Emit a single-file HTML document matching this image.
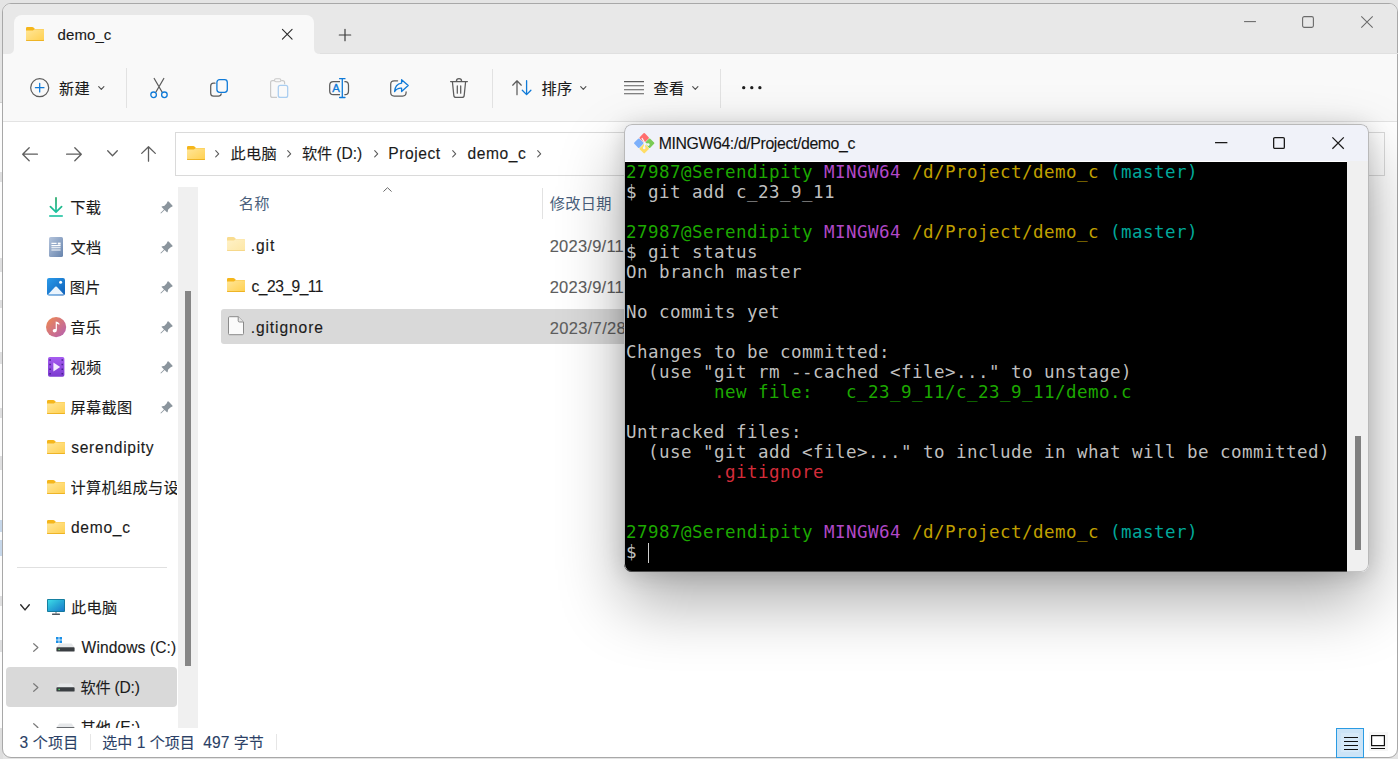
<!DOCTYPE html>
<html lang="zh-CN">
<head>
<meta charset="utf-8">
<title>demo_c</title>
<style>
*{box-sizing:border-box;margin:0;padding:0}
html,body{width:1398px;height:759px;overflow:hidden}
body{position:relative;background:#e4e4e4;font-family:"Liberation Sans","Noto Sans CJK SC",sans-serif;font-size:15px;color:#1b1b1b}
.abs{position:absolute}
svg{position:absolute;overflow:visible}
.t{position:absolute;white-space:nowrap;line-height:20px;height:20px;color:#1b1b1b;font-weight:400;-webkit-text-stroke:.12px}
#win{left:2px;top:3px;width:1396px;height:755px;border:1px solid #a8a8a8;border-radius:9px;background:#fff;overflow:hidden}
#titlebar{left:0;top:0;width:1396px;height:50px;background:#e8e8e8}
#tab{left:11px;top:10.5px;width:300px;height:40px;background:#f9f9f9;border-radius:8px 8px 0 0}
#toolbar{left:0;top:49.5px;width:1396px;height:68.5px;background:#f9f9f9;border-bottom:1px solid #e3e3e3}
#term{left:624px;top:124px;width:745px;height:448px;border-radius:8px;background:#f0f2f9;overflow:hidden;box-shadow:0 30px 66px rgba(0,0,0,.33),0 2px 22px rgba(0,0,0,.15)}
#term:after{content:"";position:absolute;left:0;top:0;right:0;bottom:0;border:1px solid #b9b9b9;border-bottom-color:rgba(150,150,150,.5);border-radius:8px}
#tbody{left:0;top:38px;width:723.3px;height:411px;background:#000;border-top:0}
#tscroll{left:723.3px;top:37px;width:22px;height:411px;background:#f0f0f0}
#tthumb{left:731.3px;top:311.8px;width:5.8px;height:114.7px;background:#808080}
.ln{position:absolute;white-space:pre;font-family:"DejaVu Sans Mono","Liberation Mono",monospace;font-size:17.5px;letter-spacing:.4645px;line-height:20px;height:20px;color:#bfbfbf}
.g{color:#1ca800}.m{color:#b148c6}.y{color:#c0a000}.c{color:#00a89a}.r{color:#d42c3a}.gn{color:#1ca800}
</style>
</head>
<body>
<div class="abs " style="left:0px;top:102px;width:3px;height:626px;background:#fcfcfc"></div>
<div class="abs " style="left:0px;top:728px;width:3px;height:31px;background:#dedede"></div>
<div class="abs " style="left:0px;top:101.5px;width:3px;height:1px;background:#cfcfcf"></div>
<div class="abs " style="left:0px;top:172px;width:2px;height:10px;background:#9a9aa0;opacity:.3"></div>
<div class="abs " style="left:0px;top:258px;width:2px;height:14px;background:#9a9aa0;opacity:.3"></div>
<div class="abs " style="left:0px;top:300px;width:2px;height:8px;background:#9a9aa0;opacity:.3"></div>
<div class="abs " style="left:0px;top:352px;width:2px;height:12px;background:#9a9aa0;opacity:.3"></div>
<div class="abs " style="left:0px;top:408px;width:2px;height:10px;background:#9a9aa0;opacity:.3"></div>
<div class="abs " style="left:0px;top:456px;width:2px;height:14px;background:#9a9aa0;opacity:.3"></div>
<div class="abs " style="left:0px;top:596px;width:2px;height:10px;background:#9a9aa0;opacity:.3"></div>
<div class="abs " style="left:0px;top:640px;width:2px;height:12px;background:#9a9aa0;opacity:.3"></div>
<div class="abs " style="left:0px;top:520px;width:2px;height:12px;background:#8fb2d8;opacity:.5"></div>
<div class="abs " style="left:0px;top:540px;width:2px;height:16px;background:#8fb2d8;opacity:.5"></div>
<div id="win" class="abs">
<div id="titlebar" class="abs"></div>
<div id="tab" class="abs"></div>
<svg style="left:305px;top:44px" width="12" height="6" viewBox="0 0 12 6"><path d="M0 6V0H6Q6 6 12 6Z" fill="#f9f9f9"/></svg>
<svg style="left:5px;top:44px" width="6" height="6" viewBox="0 0 6 6"><path d="M6 0V6H0Q6 6 6 0Z" fill="#f9f9f9"/></svg>
<div id="toolbar" class="abs"></div>
</div>
<div class="abs " style="left:320px;top:52.5px;width:1078px;height:1px;background:#e0e0e0"></div>
<svg style="left:26px;top:27px" width="18" height="14" viewBox="0 0 18 14" ><defs><linearGradient id="fg1" x1="0" y1="0" x2="1" y2="1"><stop offset="0" stop-color="#ffe699"/><stop offset="1" stop-color="#ffd04f"/></linearGradient></defs><path d="M0 1.2Q0 0 1.2 0H6.3Q7 0 7.5 .5L9 2H16.8Q18 2 18 3.2V12.8Q18 14 16.8 14H1.2Q0 14 0 12.8Z" fill="#f5b61b"/><path d="M0 3.6H6.2Q7 3.6 7.6 3.1L8.6 2.3H16.8Q18 2.3 18 3.5V12.8Q18 14 16.8 14H1.2Q0 14 0 12.8Z" fill="url(#fg1)"/><path d="M0 12.6V12.8Q0 14 1.2 14H16.8Q18 14 18 12.8V12.6Q18 13.3 16.8 13.3H1.2Q0 13.3 0 12.6Z" fill="#e9a912"/></svg>
<div id="tabtitle" class="t " style="left:57.50px;top:25.20px;font-size:15px;letter-spacing:0.100px;color:#1a1a1a">demo_c</div>
<svg style="left:282px;top:29px" width="10.5" height="10.5" viewBox="0 0 10 10" ><path d="M.4 .4L9.6 9.6M9.6 .4L.4 9.6" stroke="#2b2b2b" stroke-width="1.05" fill="none" stroke-linecap="round"/></svg>
<svg style="left:339px;top:29px" width="12" height="12" viewBox="0 0 12 12" ><path d="M6 .3V11.7M.3 6H11.7" stroke="#3c3c3c" stroke-width="1.2" fill="none" stroke-linecap="round"/></svg>
<svg style="left:1244px;top:21px" width="12" height="1.2" viewBox="0 0 12 1.2" ><path d="M0 .6H12" stroke="#6b6b6b" stroke-width="1.1"/></svg>
<svg style="left:1302px;top:16px" width="12" height="12" viewBox="0 0 12 12" ><rect x=".6" y=".6" width="10.8" height="10.8" rx="1.6" fill="none" stroke="#6b6b6b" stroke-width="1.1"/></svg>
<svg style="left:1361px;top:16px" width="12" height="12" viewBox="0 0 12 12" ><path d="M.3 .3L11.7 11.7M11.7 .3L.3 11.7" stroke="#6b6b6b" stroke-width="1.05" fill="none"/></svg>
<svg style="left:29.7px;top:77.7px" width="19.4" height="19.4" viewBox="0 0 20 20" ><circle cx="10" cy="10" r="9.3" fill="none" stroke="#5c5c5c" stroke-width="1.25"/><path d="M10 5.6V14.4M5.6 10H14.4" stroke="#0f7ad8" stroke-width="1.3" stroke-linecap="round"/></svg>
<div id="tnew" class="t " style="left:59.00px;top:79.40px;font-size:15.2px;letter-spacing:0.300px;color:#1a1a1a;font-weight:400">新建</div>
<svg style="left:98px;top:86.4px" width="6.6" height="4" viewBox="0 0 6.6 4" ><path d="M.7 .7L3.3 3.3L5.8999999999999995 .7" fill="none" stroke="#505050" stroke-width="1.15" stroke-linecap="round" stroke-linejoin="round"/></svg>
<div class="abs " style="left:126px;top:68px;width:1px;height:39.5px;background:#e2e2e2"></div>
<svg style="left:150px;top:77.7px" width="18" height="20.2" viewBox="0 0 18 20.2" ><path d="M4.2 .5L12.2 14.2M13.8 .5L5.8 14.2" stroke="#5c5c5c" stroke-width="1.25" fill="none" stroke-linecap="round"/><circle cx="3.6" cy="16.8" r="2.8" fill="none" stroke="#0f7ad8" stroke-width="1.3"/><circle cx="14.4" cy="16.8" r="2.8" fill="none" stroke="#0f7ad8" stroke-width="1.3"/></svg>
<svg style="left:210px;top:79.4px" width="18" height="17.8" viewBox="0 0 18 17.8" ><path d="M5 4.2H3.6Q.7 4.2 .7 7.1V14.2Q.7 17.1 3.6 17.1H8.4Q10.9 17.1 11.2 14.9" fill="none" stroke="#5c5c5c" stroke-width="1.25" stroke-linecap="round"/><rect x="6.9" y=".7" width="10.4" height="12.6" rx="2.7" fill="none" stroke="#0f7ad8" stroke-width="1.3"/></svg>
<svg style="left:269.7px;top:77.7px" width="18.4" height="20.2" viewBox="0 0 18.4 20.2" ><path d="M4.3 2.6H2.6Q.6 2.6 .6 4.6V17.4Q.6 19.4 2.6 19.4H7M11.2 2.6H12.6Q14.6 2.6 14.6 4.6V6.2" fill="none" stroke="#c9c9c9" stroke-width="1.2"/><rect x="4.5" y=".8" width="6.4" height="3" rx="1.5" fill="none" stroke="#c9c9c9" stroke-width="1.1"/><rect x="8.3" y="7.3" width="9.4" height="12.2" rx="2" fill="none" stroke="#a9cdf0" stroke-width="1.25"/></svg>
<svg style="left:329px;top:77.7px" width="20.2" height="20.2" viewBox="0 0 20.2 20.2" ><path d="M11 3.6H4.4Q.7 3.6 .7 7.3V12.9Q.7 16.6 4.4 16.6H11M15.4 3.6H16.2Q19.5 3.6 19.5 7.3V12.9Q19.5 16.6 16.2 16.6H15.4" fill="none" stroke="#5c5c5c" stroke-width="1.25"/><path d="M10.6 .7H16M10.6 19.5H16M13.3 .7V19.5" stroke="#0f7ad8" stroke-width="1.3" fill="none" stroke-linecap="round"/><text x="7" y="13.9" text-anchor="middle" font-family="Liberation Sans,sans-serif" font-size="11.4" fill="#0f7ad8" stroke="#0f7ad8" stroke-width=".35">A</text></svg>
<svg style="left:390px;top:79.2px" width="19" height="17.8" viewBox="0 0 19 17.8" ><path d="M7.6 1.8H4.2Q.7 1.8 .7 5.3V13.6Q.7 17.1 4.2 17.1H12.6Q16.1 17.1 16.1 13.6V12.9" fill="none" stroke="#5c5c5c" stroke-width="1.25" stroke-linecap="round"/><path d="M11.6 .7L18.2 6.6L11.6 12.5V9.2Q7 8.9 4.6 12.6Q5 5.2 11.6 4.2Z" fill="none" stroke="#0f7ad8" stroke-width="1.3" stroke-linejoin="round"/></svg>
<svg style="left:450px;top:77.7px" width="18" height="20.2" viewBox="0 0 18 20.2" ><path d="M.6 3.6H17.4M6.4 3.4Q6.4 .7 9 .7Q11.6 .7 11.6 3.4M2.4 3.8L3.8 17.4Q4 19.5 6 19.5H12Q14 19.5 14.2 17.4L15.6 3.8M7.3 8V15.2M10.7 8V15.2" fill="none" stroke="#5c5c5c" stroke-width="1.25" stroke-linecap="round"/></svg>
<div class="abs " style="left:492px;top:68.5px;width:1px;height:39.5px;background:#e2e2e2"></div>
<svg style="left:511.8px;top:80.2px" width="20.4" height="15.4" viewBox="0 0 20.4 15.4" ><path d="M5 14.7V1M.7 5.2L5 .8L9.3 5.2" fill="none" stroke="#5c5c5c" stroke-width="1.25" stroke-linecap="round" stroke-linejoin="round"/><path d="M14.6 .7V14.4M10.3 10.2L14.6 14.6L18.9 10.2" fill="none" stroke="#0f7ad8" stroke-width="1.3" stroke-linecap="round" stroke-linejoin="round"/></svg>
<div id="tsort" class="t " style="left:541.50px;top:79.40px;font-size:15.2px;letter-spacing:0.300px;color:#1a1a1a;font-weight:400">排序</div>
<svg style="left:579.8px;top:86.3px" width="6.6" height="4" viewBox="0 0 6.6 4" ><path d="M.7 .7L3.3 3.3L5.8999999999999995 .7" fill="none" stroke="#505050" stroke-width="1.15" stroke-linecap="round" stroke-linejoin="round"/></svg>
<svg style="left:624.2px;top:81.2px" width="20" height="13.4" viewBox="0 0 20 13.4" ><path d="M0 .6H20M0 4.7H20M0 8.8H20M0 12.8H20" stroke="#5c5c5c" stroke-width="1.1"/></svg>
<div id="tview" class="t " style="left:653.50px;top:79.40px;font-size:15.2px;letter-spacing:0.300px;color:#1a1a1a;font-weight:400">查看</div>
<svg style="left:691.5px;top:86.3px" width="6.6" height="4" viewBox="0 0 6.6 4" ><path d="M.7 .7L3.3 3.3L5.8999999999999995 .7" fill="none" stroke="#505050" stroke-width="1.15" stroke-linecap="round" stroke-linejoin="round"/></svg>
<div class="abs " style="left:720px;top:68.5px;width:1px;height:39.5px;background:#e2e2e2"></div>
<svg style="left:741.6px;top:86.3px" width="19.6" height="3.4" viewBox="0 0 19.6 3.4" ><circle cx="1.7" cy="1.7" r="1.65" fill="#1f1f1f"/><circle cx="9.8" cy="1.7" r="1.65" fill="#1f1f1f"/><circle cx="17.9" cy="1.7" r="1.65" fill="#1f1f1f"/></svg>
<svg style="left:22px;top:147px" width="16" height="14.4" viewBox="0 0 16 14.4" ><path d="M15.4 7.2H.9M7.2 .7L.7 7.2L7.2 13.7" fill="none" stroke="#5e5e5e" stroke-width="1.3" stroke-linecap="round" stroke-linejoin="round"/></svg>
<svg style="left:66px;top:147px" width="16" height="14.4" viewBox="0 0 16 14.4" ><path d="M.6 7.2H15.1M8.8 .7L15.3 7.2L8.8 13.7" fill="none" stroke="#5e5e5e" stroke-width="1.3" stroke-linecap="round" stroke-linejoin="round"/></svg>
<svg style="left:107px;top:150px" width="11" height="6.4" viewBox="0 0 11 6.4" ><path d="M.7 .7L5.5 5.7L10.3 .7" fill="none" stroke="#5e5e5e" stroke-width="1.3" stroke-linecap="round" stroke-linejoin="round"/></svg>
<svg style="left:140.7px;top:146px" width="15" height="15.8" viewBox="0 0 15 15.8" ><path d="M7.5 15.2V.9M.7 7.4L7.5 .7L14.3 7.4" fill="none" stroke="#5e5e5e" stroke-width="1.3" stroke-linecap="round" stroke-linejoin="round"/></svg>
<div class="abs " style="left:175px;top:132px;width:1210px;height:44px;border:1px solid #dadada;background:#fff"></div>
<svg style="left:187.2px;top:146px" width="18" height="14" viewBox="0 0 18 14" ><defs><linearGradient id="fg2" x1="0" y1="0" x2="1" y2="1"><stop offset="0" stop-color="#ffe699"/><stop offset="1" stop-color="#ffd04f"/></linearGradient></defs><path d="M0 1.2Q0 0 1.2 0H6.3Q7 0 7.5 .5L9 2H16.8Q18 2 18 3.2V12.8Q18 14 16.8 14H1.2Q0 14 0 12.8Z" fill="#f5b61b"/><path d="M0 3.6H6.2Q7 3.6 7.6 3.1L8.6 2.3H16.8Q18 2.3 18 3.5V12.8Q18 14 16.8 14H1.2Q0 14 0 12.8Z" fill="url(#fg2)"/><path d="M0 12.6V12.8Q0 14 1.2 14H16.8Q18 14 18 12.8V12.6Q18 13.3 16.8 13.3H1.2Q0 13.3 0 12.6Z" fill="#e9a912"/></svg>
<svg style="left:215.2px;top:149.5px" width="4.4" height="7.6" viewBox="0 0 4.4 7.6" ><path d="M.7 .7L3.7 3.8L.7 6.8999999999999995" fill="none" stroke="#5a5a5a" stroke-width="1.1" stroke-linecap="round" stroke-linejoin="round"/></svg>
<div id="bc1" class="t " style="left:230.50px;top:144.40px;font-size:15.2px;letter-spacing:0.300px;">此电脑</div>
<svg style="left:287px;top:149.5px" width="4.4" height="7.6" viewBox="0 0 4.4 7.6" ><path d="M.7 .7L3.7 3.8L.7 6.8999999999999995" fill="none" stroke="#5a5a5a" stroke-width="1.1" stroke-linecap="round" stroke-linejoin="round"/></svg>
<div id="bc2" class="t " style="left:302.00px;top:144.40px;font-size:15.2px;letter-spacing:-0.082px;">软件 <span style="font-size:15.6px">(D:)</span></div>
<svg style="left:374px;top:149.5px" width="4.4" height="7.6" viewBox="0 0 4.4 7.6" ><path d="M.7 .7L3.7 3.8L.7 6.8999999999999995" fill="none" stroke="#5a5a5a" stroke-width="1.1" stroke-linecap="round" stroke-linejoin="round"/></svg>
<div id="bc3" class="t " style="left:388.35px;top:143.70px;font-size:15.6px;letter-spacing:0.541px;">Project</div>
<svg style="left:452.4px;top:149.5px" width="4.4" height="7.6" viewBox="0 0 4.4 7.6" ><path d="M.7 .7L3.7 3.8L.7 6.8999999999999995" fill="none" stroke="#5a5a5a" stroke-width="1.1" stroke-linecap="round" stroke-linejoin="round"/></svg>
<div id="bc4" class="t " style="left:467.50px;top:143.70px;font-size:15.6px;letter-spacing:0.550px;">demo_c</div>
<svg style="left:537px;top:149.5px" width="4.4" height="7.6" viewBox="0 0 4.4 7.6" ><path d="M.7 .7L3.7 3.8L.7 6.8999999999999995" fill="none" stroke="#5a5a5a" stroke-width="1.1" stroke-linecap="round" stroke-linejoin="round"/></svg>
<div class="abs " style="left:178px;top:187px;width:20px;height:541px;background:#f0f0f0"></div>
<div class="abs " style="left:185px;top:291px;width:6.4px;height:374.5px;background:#868686"></div>
<svg style="left:49px;top:197px" width="14" height="20" viewBox="0 0 14 20" ><defs><linearGradient id="dlg" x1="0" y1="0" x2="0" y2="1"><stop offset="0" stop-color="#25a868"/><stop offset="1" stop-color="#1cc2a0"/></linearGradient></defs><path d="M7 .8V15M1.4 9.6L7 15.2L12.6 9.6" fill="none" stroke="url(#dlg)" stroke-width="1.7" stroke-linecap="round" stroke-linejoin="round"/><path d="M.2 19H13.8" stroke="#1cc2a0" stroke-width="1.6"/></svg>
<div id="s1" class="t " style="left:70.25px;top:198.40px;font-size:15.2px;letter-spacing:0.300px;">下载</div>
<svg style="left:160px;top:200.6px" width="13" height="13" viewBox="0 0 13 13" ><path d="M8.6 .6L12.4 4.4Q13 5.1 12.3 5.6L10.4 6.4L8 8.8Q8.2 10.6 7.2 11.6L4.6 9L1 12.6L.4 12L4 8.4L1.4 5.8Q2.4 4.8 4.2 5L6.6 2.6L7.4 .7Q7.9 0 8.6 .6Z" fill="#8b959d"/></svg>
<svg style="left:49px;top:237px" width="14" height="20" viewBox="0 0 14 20" ><defs><linearGradient id="dcg" x1="0" y1="0" x2="1" y2="1"><stop offset="0" stop-color="#b4c4dc"/><stop offset="1" stop-color="#6784ad"/></linearGradient></defs><rect width="14" height="20" rx="1.6" fill="url(#dcg)"/><path d="M2.4 6.4H7.6M2.4 8.6H11.6M2.4 10.8H11.6M2.4 13H11.6" stroke="#fff" stroke-width="1.1"/><rect x="8.8" y="5.6" width="2.8" height="2" fill="#fff"/></svg>
<div id="s2" class="t " style="left:70.50px;top:238.40px;font-size:15.2px;letter-spacing:0.300px;">文档</div>
<svg style="left:160px;top:240.6px" width="13" height="13" viewBox="0 0 13 13" ><path d="M8.6 .6L12.4 4.4Q13 5.1 12.3 5.6L10.4 6.4L8 8.8Q8.2 10.6 7.2 11.6L4.6 9L1 12.6L.4 12L4 8.4L1.4 5.8Q2.4 4.8 4.2 5L6.6 2.6L7.4 .7Q7.9 0 8.6 .6Z" fill="#8b959d"/></svg>
<svg style="left:47px;top:278.3px" width="18" height="17.4" viewBox="0 0 18 17.4" ><defs><linearGradient id="pcg" x1="0" y1="0" x2="1" y2="1"><stop offset="0" stop-color="#2a9bea"/><stop offset="1" stop-color="#0f5fb8"/></linearGradient></defs><rect width="18" height="17.4" rx="2" fill="url(#pcg)"/><path d="M1 16.4L8.2 8.8Q9 8 9.8 8.8L17 16.4Z" fill="#eaf4fd"/><circle cx="13.6" cy="4.2" r="1.5" fill="#fff"/></svg>
<div id="s3" class="t " style="left:69.75px;top:278.40px;font-size:15.2px;letter-spacing:0.300px;">图片</div>
<svg style="left:160px;top:280.6px" width="13" height="13" viewBox="0 0 13 13" ><path d="M8.6 .6L12.4 4.4Q13 5.1 12.3 5.6L10.4 6.4L8 8.8Q8.2 10.6 7.2 11.6L4.6 9L1 12.6L.4 12L4 8.4L1.4 5.8Q2.4 4.8 4.2 5L6.6 2.6L7.4 .7Q7.9 0 8.6 .6Z" fill="#8b959d"/></svg>
<svg style="left:45.8px;top:316.9px" width="20.2" height="20.2" viewBox="0 0 20 20" ><defs><linearGradient id="mug" x1="0" y1="0" x2="1" y2="1"><stop offset="0" stop-color="#f08a4e"/><stop offset="1" stop-color="#b45fb4"/></linearGradient></defs><circle cx="10" cy="10" r="10" fill="url(#mug)"/><path d="M9.6 4.4Q11.6 4.6 13.2 6.2V8Q11.6 6.8 10.8 6.8V13Q10.8 15.4 8.6 15.4Q6.6 15.4 6.6 13.6Q6.6 11.8 8.6 11.8Q9.2 11.8 9.6 12Z" fill="#fff"/></svg>
<div id="s4" class="t " style="left:70.25px;top:318.40px;font-size:15.2px;letter-spacing:0.300px;">音乐</div>
<svg style="left:160px;top:320.6px" width="13" height="13" viewBox="0 0 13 13" ><path d="M8.6 .6L12.4 4.4Q13 5.1 12.3 5.6L10.4 6.4L8 8.8Q8.2 10.6 7.2 11.6L4.6 9L1 12.6L.4 12L4 8.4L1.4 5.8Q2.4 4.8 4.2 5L6.6 2.6L7.4 .7Q7.9 0 8.6 .6Z" fill="#8b959d"/></svg>
<svg style="left:47.7px;top:357.2px" width="16.4" height="19.8" viewBox="0 0 16.4 19.8" ><defs><linearGradient id="vdg" x1="0" y1="0" x2="0" y2="1"><stop offset="0" stop-color="#a65cf0"/><stop offset="1" stop-color="#7c3bd0"/></linearGradient></defs><rect width="16.4" height="19.8" rx="1.8" fill="url(#vdg)"/><path d="M5.4 5.4L12.2 9.9L5.4 14.4Z" fill="#f4ebff"/><path d="M1.3 3H2.9M1.3 7.6H2.9M1.3 12.2H2.9M1.3 16.8H2.9M13.5 3H15.1M13.5 7.6H15.1M13.5 12.2H15.1M13.5 16.8H15.1" stroke="#4a2490" stroke-width="1.5"/></svg>
<div id="s5" class="t " style="left:70.50px;top:358.40px;font-size:15.2px;letter-spacing:0.300px;">视频</div>
<svg style="left:160px;top:360.6px" width="13" height="13" viewBox="0 0 13 13" ><path d="M8.6 .6L12.4 4.4Q13 5.1 12.3 5.6L10.4 6.4L8 8.8Q8.2 10.6 7.2 11.6L4.6 9L1 12.6L.4 12L4 8.4L1.4 5.8Q2.4 4.8 4.2 5L6.6 2.6L7.4 .7Q7.9 0 8.6 .6Z" fill="#8b959d"/></svg>
<svg style="left:47px;top:400px" width="18" height="14" viewBox="0 0 18 14" ><defs><linearGradient id="fg3" x1="0" y1="0" x2="1" y2="1"><stop offset="0" stop-color="#ffe699"/><stop offset="1" stop-color="#ffd04f"/></linearGradient></defs><path d="M0 1.2Q0 0 1.2 0H6.3Q7 0 7.5 .5L9 2H16.8Q18 2 18 3.2V12.8Q18 14 16.8 14H1.2Q0 14 0 12.8Z" fill="#f5b61b"/><path d="M0 3.6H6.2Q7 3.6 7.6 3.1L8.6 2.3H16.8Q18 2.3 18 3.5V12.8Q18 14 16.8 14H1.2Q0 14 0 12.8Z" fill="url(#fg3)"/><path d="M0 12.6V12.8Q0 14 1.2 14H16.8Q18 14 18 12.8V12.6Q18 13.3 16.8 13.3H1.2Q0 13.3 0 12.6Z" fill="#e9a912"/></svg>
<div id="s6" class="t " style="left:70.50px;top:398.40px;font-size:15.2px;letter-spacing:0.300px;">屏幕截图</div>
<svg style="left:160px;top:400.6px" width="13" height="13" viewBox="0 0 13 13" ><path d="M8.6 .6L12.4 4.4Q13 5.1 12.3 5.6L10.4 6.4L8 8.8Q8.2 10.6 7.2 11.6L4.6 9L1 12.6L.4 12L4 8.4L1.4 5.8Q2.4 4.8 4.2 5L6.6 2.6L7.4 .7Q7.9 0 8.6 .6Z" fill="#8b959d"/></svg>
<svg style="left:47px;top:440px" width="18" height="14" viewBox="0 0 18 14" ><defs><linearGradient id="fg4" x1="0" y1="0" x2="1" y2="1"><stop offset="0" stop-color="#ffe699"/><stop offset="1" stop-color="#ffd04f"/></linearGradient></defs><path d="M0 1.2Q0 0 1.2 0H6.3Q7 0 7.5 .5L9 2H16.8Q18 2 18 3.2V12.8Q18 14 16.8 14H1.2Q0 14 0 12.8Z" fill="#f5b61b"/><path d="M0 3.6H6.2Q7 3.6 7.6 3.1L8.6 2.3H16.8Q18 2.3 18 3.5V12.8Q18 14 16.8 14H1.2Q0 14 0 12.8Z" fill="url(#fg4)"/><path d="M0 12.6V12.8Q0 14 1.2 14H16.8Q18 14 18 12.8V12.6Q18 13.3 16.8 13.3H1.2Q0 13.3 0 12.6Z" fill="#e9a912"/></svg>
<div id="s7" class="t " style="left:71.25px;top:437.70px;font-size:15.6px;letter-spacing:0.700px;">serendipity</div>
<svg style="left:47px;top:480px" width="18" height="14" viewBox="0 0 18 14" ><defs><linearGradient id="fg5" x1="0" y1="0" x2="1" y2="1"><stop offset="0" stop-color="#ffe699"/><stop offset="1" stop-color="#ffd04f"/></linearGradient></defs><path d="M0 1.2Q0 0 1.2 0H6.3Q7 0 7.5 .5L9 2H16.8Q18 2 18 3.2V12.8Q18 14 16.8 14H1.2Q0 14 0 12.8Z" fill="#f5b61b"/><path d="M0 3.6H6.2Q7 3.6 7.6 3.1L8.6 2.3H16.8Q18 2.3 18 3.5V12.8Q18 14 16.8 14H1.2Q0 14 0 12.8Z" fill="url(#fg5)"/><path d="M0 12.6V12.8Q0 14 1.2 14H16.8Q18 14 18 12.8V12.6Q18 13.3 16.8 13.3H1.2Q0 13.3 0 12.6Z" fill="#e9a912"/></svg>
<div class="abs" style="left:71px;top:477px;width:106px;height:24px;overflow:hidden"><div id="s8" class="t " style="left:-0.50px;top:1.40px;font-size:15.2px;letter-spacing:0.300px;">计算机组成与设计</div></div>
<svg style="left:47px;top:520px" width="18" height="14" viewBox="0 0 18 14" ><defs><linearGradient id="fg6" x1="0" y1="0" x2="1" y2="1"><stop offset="0" stop-color="#ffe699"/><stop offset="1" stop-color="#ffd04f"/></linearGradient></defs><path d="M0 1.2Q0 0 1.2 0H6.3Q7 0 7.5 .5L9 2H16.8Q18 2 18 3.2V12.8Q18 14 16.8 14H1.2Q0 14 0 12.8Z" fill="#f5b61b"/><path d="M0 3.6H6.2Q7 3.6 7.6 3.1L8.6 2.3H16.8Q18 2.3 18 3.5V12.8Q18 14 16.8 14H1.2Q0 14 0 12.8Z" fill="url(#fg6)"/><path d="M0 12.6V12.8Q0 14 1.2 14H16.8Q18 14 18 12.8V12.6Q18 13.3 16.8 13.3H1.2Q0 13.3 0 12.6Z" fill="#e9a912"/></svg>
<div id="s9" class="t " style="left:71.00px;top:517.70px;font-size:15.6px;letter-spacing:0.700px;">demo_c</div>
<div class="abs " style="left:16.5px;top:567px;width:150.5px;height:1px;background:#e0e0e0"></div>
<svg style="left:20px;top:604px" width="10" height="6.6" viewBox="0 0 10 6.6" ><path d="M.7 .7L5.0 5.8999999999999995L9.3 .7" fill="none" stroke="#2a2a2a" stroke-width="1.4" stroke-linecap="round" stroke-linejoin="round"/></svg>
<svg style="left:47px;top:599px" width="18" height="16" viewBox="0 0 18 16" ><defs><linearGradient id="pcm" x1="0" y1="0" x2="1" y2="1"><stop offset="0" stop-color="#3ddbe8"/><stop offset=".5" stop-color="#27a9d6"/><stop offset="1" stop-color="#1a78cc"/></linearGradient></defs><rect x="0" y="0" width="18" height="13" rx=".9" fill="#12789a"/><rect x=".9" y=".9" width="16.2" height="11.2" fill="url(#pcm)"/><rect x="8.1" y="13" width="1.8" height="1.7" fill="#a9afb5"/><rect x="5" y="14.6" width="8" height="1.3" rx=".4" fill="#4e555c"/></svg>
<div id="s10" class="t " style="left:71.00px;top:598.40px;font-size:15.2px;letter-spacing:0.300px;">此电脑</div>
<svg style="left:32.7px;top:642.8px" width="5.6" height="9" viewBox="0 0 5.6 9" ><path d="M.7 .7L4.8999999999999995 4.5L.7 8.3" fill="none" stroke="#7a7a7a" stroke-width="1.2" stroke-linecap="round" stroke-linejoin="round"/></svg>
<svg style="left:55.8px;top:637px" width="19" height="15" viewBox="0 0 19 15" ><path d="M3.4 6.6H15.6L18.6 10.4H.4Z" fill="#e6e8ea"/><rect x=".4" y="10.2" width="18.2" height="4.4" rx=".9" fill="#3a3e42"/><rect x="2.4" y="11.8" width="1.5" height="1.3" fill="#4be06a"/><rect x="0" y="0" width="2.6" height="2.6" fill="#1a8fe6"/><rect x="3.4" y="0" width="2.6" height="2.6" fill="#1a8fe6"/><rect x="0" y="3.4" width="2.6" height="2.6" fill="#1a8fe6"/><rect x="3.4" y="3.4" width="2.6" height="2.6" fill="#1a8fe6"/></svg>
<div id="s11" class="t " style="left:81.60px;top:637.70px;font-size:15.6px;letter-spacing:0.087px;">Windows (C:)</div>
<div class="abs " style="left:6px;top:667px;width:171px;height:40px;background:#d9d9d9;border-radius:4px"></div>
<svg style="left:32.7px;top:682.8px" width="5.6" height="9" viewBox="0 0 5.6 9" ><path d="M.7 .7L4.8999999999999995 4.5L.7 8.3" fill="none" stroke="#7a7a7a" stroke-width="1.2" stroke-linecap="round" stroke-linejoin="round"/></svg>
<svg style="left:55.8px;top:677px" width="19" height="15" viewBox="0 0 19 15" ><path d="M3.4 6.6H15.6L18.6 10.4H.4Z" fill="#e6e8ea"/><rect x=".4" y="10.2" width="18.2" height="4.4" rx=".9" fill="#3a3e42"/><rect x="2.4" y="11.8" width="1.5" height="1.3" fill="#4be06a"/></svg>
<div id="s12" class="t " style="left:80.50px;top:678.40px;font-size:15.2px;letter-spacing:-0.208px;">软件 <span style="font-size:15.6px">(D:)</span></div>
<div class="abs" style="left:6px;top:711px;width:172px;height:16.8px;overflow:hidden">
<svg style="left:26.7px;top:11.8px" width="5.6" height="9" viewBox="0 0 5.6 9" ><path d="M.7 .7L4.8999999999999995 4.5L.7 8.3" fill="none" stroke="#7a7a7a" stroke-width="1.2" stroke-linecap="round" stroke-linejoin="round"/></svg>
<svg style="left:49.8px;top:6px" width="19" height="15" viewBox="0 0 19 15" ><path d="M3.4 6.6H15.6L18.6 10.4H.4Z" fill="#e6e8ea"/><rect x=".4" y="10.2" width="18.2" height="4.4" rx=".9" fill="#3a3e42"/><rect x="2.4" y="11.8" width="1.5" height="1.3" fill="#4be06a"/></svg>
<div id="s13" class="t " style="left:74.50px;top:7.40px;font-size:15.2px;">其他 <span style="font-size:15.6px">(E:)</span></div>
</div>
<div id="h1" class="t " style="left:238.75px;top:194.10px;font-size:15.2px;letter-spacing:0.300px;color:#4a5f7c;-webkit-text-stroke:0">名称</div>
<svg style="left:383px;top:187px" width="9" height="5" viewBox="0 0 9 5" ><path d="M.7 4.3L4.5 .7L8.3 4.3" fill="none" stroke="#6a6a6a" stroke-width="1" stroke-linecap="round" stroke-linejoin="round"/></svg>
<div class="abs " style="left:542px;top:187.5px;width:1px;height:31.5px;background:#e2e2e2"></div>
<div id="h2" class="t " style="left:549.75px;top:194.10px;font-size:15.2px;letter-spacing:0.300px;color:#4a5f7c;-webkit-text-stroke:0">修改日期</div>
<svg style="left:227px;top:237.2px" width="18" height="14" viewBox="0 0 18 14" ><defs><linearGradient id="fg7" x1="0" y1="0" x2="1" y2="1"><stop offset="0" stop-color="#fff1c7"/><stop offset="1" stop-color="#fde7a6"/></linearGradient></defs><path d="M0 1.2Q0 0 1.2 0H6.3Q7 0 7.5 .5L9 2H16.8Q18 2 18 3.2V12.8Q18 14 16.8 14H1.2Q0 14 0 12.8Z" fill="#f9dc8f"/><path d="M0 3.6H6.2Q7 3.6 7.6 3.1L8.6 2.3H16.8Q18 2.3 18 3.5V12.8Q18 14 16.8 14H1.2Q0 14 0 12.8Z" fill="url(#fg7)"/><path d="M0 12.6V12.8Q0 14 1.2 14H16.8Q18 14 18 12.8V12.6Q18 13.3 16.8 13.3H1.2Q0 13.3 0 12.6Z" fill="#f4d27f"/></svg>
<div id="f1" class="t " style="left:250.65px;top:235.70px;font-size:15.6px;letter-spacing:0.948px;">.git</div>
<div id="d1" class="t " style="left:549.65px;top:235.70px;font-size:16.5px;letter-spacing:0.244px;color:#5e5e5e">2023/9/11</div>
<svg style="left:227px;top:278.2px" width="18" height="14" viewBox="0 0 18 14" ><defs><linearGradient id="fg8" x1="0" y1="0" x2="1" y2="1"><stop offset="0" stop-color="#ffe699"/><stop offset="1" stop-color="#ffd04f"/></linearGradient></defs><path d="M0 1.2Q0 0 1.2 0H6.3Q7 0 7.5 .5L9 2H16.8Q18 2 18 3.2V12.8Q18 14 16.8 14H1.2Q0 14 0 12.8Z" fill="#f5b61b"/><path d="M0 3.6H6.2Q7 3.6 7.6 3.1L8.6 2.3H16.8Q18 2.3 18 3.5V12.8Q18 14 16.8 14H1.2Q0 14 0 12.8Z" fill="url(#fg8)"/><path d="M0 12.6V12.8Q0 14 1.2 14H16.8Q18 14 18 12.8V12.6Q18 13.3 16.8 13.3H1.2Q0 13.3 0 12.6Z" fill="#e9a912"/></svg>
<div id="f2" class="t " style="left:251.50px;top:276.70px;font-size:15.6px;letter-spacing:-0.499px;">c_23_9_11</div>
<div id="d2" class="t " style="left:549.65px;top:276.70px;font-size:16.5px;letter-spacing:0.244px;color:#5e5e5e">2023/9/11</div>
<div class="abs " style="left:221px;top:309px;width:480px;height:35px;background:#d9d9d9;border-radius:3px"></div>
<svg style="left:228px;top:316.3px" width="16" height="19.4" viewBox="0 0 16 19" ><path d="M1.6 .5H10.2L15.5 5.8V17.4Q15.5 18.5 14.4 18.5H1.6Q.5 18.5 .5 17.4V1.6Q.5 .5 1.6 .5Z" fill="#fbfbfb" stroke="#8a8a8a" stroke-width="1"/><path d="M10.2 .5V4.6Q10.2 5.8 11.4 5.8H15.5" fill="#e4e4e4" stroke="#8a8a8a" stroke-width="1" stroke-linejoin="round"/></svg>
<div id="f3" class="t " style="left:250.65px;top:317.70px;font-size:15.6px;letter-spacing:0.902px;">.gitignore</div>
<div id="d3" class="t " style="left:549.65px;top:317.70px;font-size:16.5px;letter-spacing:0.338px;color:#5e5e5e">2023/7/28</div>
<div id="st1" class="t " style="left:19.50px;top:733.40px;font-size:15px;letter-spacing:0.250px;color:#2b3f66"><span style="font-size:15.6px">3</span> 个项目</div>
<div class="abs " style="left:90px;top:734px;width:1px;height:16px;background:#e6e6e6"></div>
<div id="st2" class="t " style="left:102.25px;top:733.40px;font-size:15px;letter-spacing:0.070px;color:#2b3f66;white-space:pre">选中 <span style="font-size:15.6px">1</span> 个项目  <span style="font-size:15.6px">497</span> 字节</div>
<div class="abs " style="left:276px;top:734px;width:1px;height:16px;background:#e6e6e6"></div>
<div class="abs " style="left:1336px;top:728px;width:28px;height:30px;background:#cce4f7;border:1px solid #2a9be3"></div>
<div class="abs " style="left:1341px;top:733px;width:18px;height:19px;background:#d6e9f8"></div>
<svg style="left:1344px;top:737px" width="14" height="13" viewBox="0 0 14 13" ><path d="M0 .5H14M0 4.5H14M0 8.5H14M0 12.5H14" stroke="#111" stroke-width="1" shape-rendering="crispEdges"/></svg>
<div class="abs " style="left:1368.5px;top:732.4px;width:19px;height:19px;background:#f6f6f6"></div>
<svg style="left:1371px;top:735px" width="14" height="14" viewBox="0 0 14 14" ><rect x=".6" y=".6" width="12.8" height="10" fill="#fff" stroke="#111" stroke-width="1.2"/><path d="M0 13.5H14" stroke="#111" stroke-width="1" shape-rendering="crispEdges"/></svg>
<div id="term" class="abs">
<div class="abs" style="left:0;top:37px;width:745px;height:1px;background:#fff"></div><div id="tbody" class="abs"></div><div id="tscroll" class="abs"></div><div id="tthumb" class="abs"></div>
</div>
<svg style="left:633.8px;top:132.7px" width="20.4" height="20.4" viewBox="0 0 20 20" ><g transform="rotate(45 10 10)"><rect x="2.7" y="2.7" width="7.1" height="7.1" rx=".9" fill="#ff6e6e"/><rect x="10.2" y="2.7" width="7.1" height="7.1" rx=".9" fill="#7acb54"/><rect x="2.7" y="10.2" width="7.1" height="7.1" rx=".9" fill="#7cb0fb"/><rect x="10.2" y="10.2" width="7.1" height="7.1" rx=".9" fill="#ffdd66"/></g><path d="M8 5.4L11 10.4M11 10.4L14 11.4M10.6 10.6L10 14.4" stroke="#f3f4fb" stroke-width="1.3" fill="none" stroke-linecap="round"/><circle cx="14" cy="11.4" r="1.3" fill="#f3f4fb"/><circle cx="10" cy="14.6" r="1.3" fill="#f3f4fb"/><circle cx="10.8" cy="10.4" r="1.2" fill="#f3f4fb"/></svg>
<div id="ttitle" class="t " style="left:658.65px;top:134.30px;font-size:15.85px;letter-spacing:-0.387px;color:#141414">MINGW64:/d/Project/demo_c</div>
<svg style="left:1214.6px;top:142px" width="12.4" height="1.3" viewBox="0 0 12.4 1.3" ><path d="M0 .65H12.4" stroke="#1a1a1a" stroke-width="1.25"/></svg>
<svg style="left:1273px;top:137px" width="12" height="12" viewBox="0 0 12 12" ><rect x=".65" y=".65" width="10.7" height="10.7" rx="1.2" fill="none" stroke="#1a1a1a" stroke-width="1.3"/></svg>
<svg style="left:1332px;top:136.8px" width="12.2" height="12.2" viewBox="0 0 12.2 12.2" ><path d="M.4 .4L11.8 11.8M11.8 .4L.4 11.8" stroke="#1a1a1a" stroke-width="1.25" fill="none"/></svg>
<div class="ln" style="left:626px;top:161.9px"><span class="g">27987@Serendipity</span> <span class="m">MINGW64</span> <span class="y">/d/Project/demo_c</span> <span class="c">(master)</span></div>
<div class="ln" style="left:626px;top:181.9px">$ git add c_23_9_11</div>
<div class="ln" style="left:626px;top:221.9px"><span class="g">27987@Serendipity</span> <span class="m">MINGW64</span> <span class="y">/d/Project/demo_c</span> <span class="c">(master)</span></div>
<div class="ln" style="left:626px;top:241.9px">$ git status</div>
<div class="ln" style="left:626px;top:261.9px">On branch master</div>
<div class="ln" style="left:626px;top:301.9px">No commits yet</div>
<div class="ln" style="left:626px;top:341.9px">Changes to be committed:</div>
<div class="ln" style="left:626px;top:361.9px">  (use "git rm --cached &lt;file&gt;..." to unstage)</div>
<div class="ln" style="left:626px;top:381.9px">        <span class="gn">new file:   c_23_9_11/c_23_9_11/demo.c</span></div>
<div class="ln" style="left:626px;top:421.9px">Untracked files:</div>
<div class="ln" style="left:626px;top:441.9px">  (use "git add &lt;file&gt;..." to include in what will be committed)</div>
<div class="ln" style="left:626px;top:461.9px">        <span class="r">.gitignore</span></div>
<div class="ln" style="left:626px;top:521.9px"><span class="g">27987@Serendipity</span> <span class="m">MINGW64</span> <span class="y">/d/Project/demo_c</span> <span class="c">(master)</span></div>
<div class="ln" style="left:626px;top:541.9px">$ </div>
<div class="abs " style="left:647.9px;top:543px;width:1.3px;height:20px;background:#cfcfcf"></div>
</body>
</html>
